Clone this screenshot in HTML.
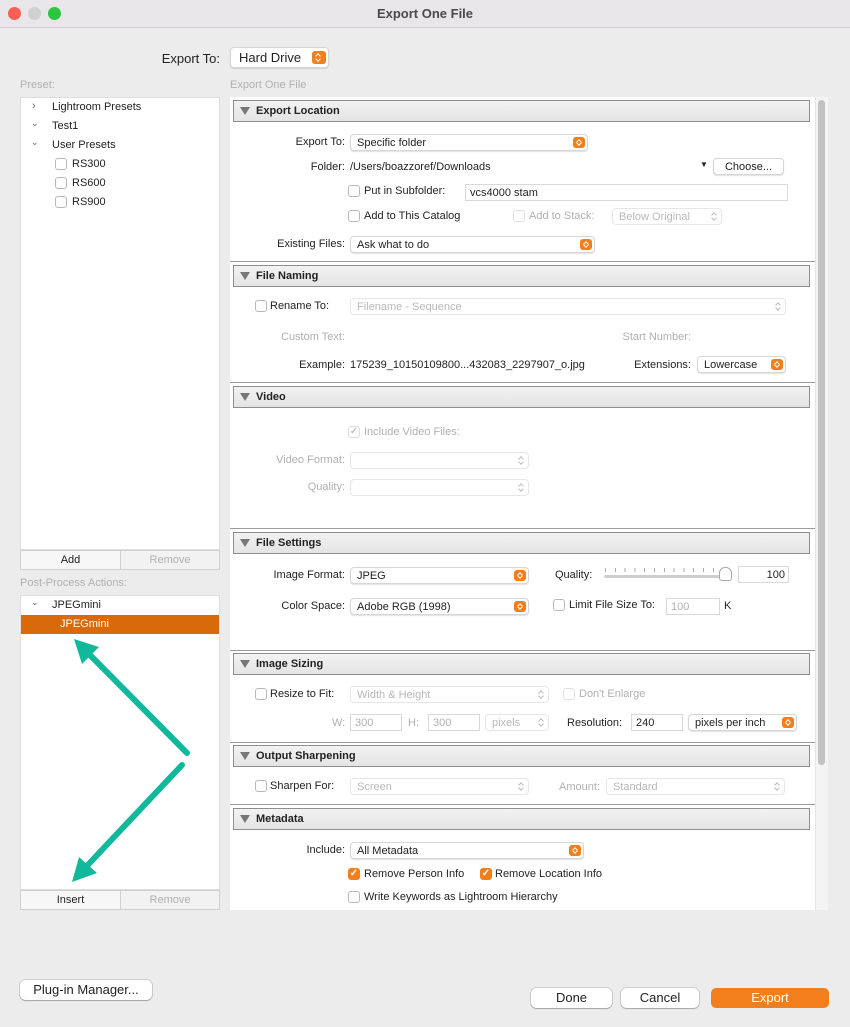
<!DOCTYPE html>
<html><head><meta charset="utf-8"><style>
*{box-sizing:border-box;margin:0;padding:0}
body{width:850px;height:1027px;background:#ececec;font-family:"Liberation Sans",sans-serif;font-size:11px;color:#222;position:relative;overflow:hidden}
.a{position:absolute;white-space:nowrap}
.r{text-align:right}
.g{color:#b0b0b0}
.pop{position:absolute;background:#fff;border:1px solid #d6d6d6;border-radius:4px;box-shadow:0 1px 1px rgba(0,0,0,.12);padding-left:6px;font-size:11px;line-height:16px}
.pop.d{color:#b8b8b8;border-color:#e6e6e6;box-shadow:none}
.or{position:absolute;right:2px;top:2px;width:12px;bottom:2px;background:#f27f1b;border-radius:3px;font-size:0}
.dd{position:absolute;right:3px;top:1px;width:10px;bottom:1px;font-size:0}
.or:before,.dd:before{content:"";position:absolute;left:4px;top:3px;width:3px;height:3px;border-left:1.2px solid #fff;border-top:1.2px solid #fff;transform:rotate(45deg)}
.or:after,.dd:after{content:"";position:absolute;left:4px;bottom:3px;width:3px;height:3px;border-right:1.2px solid #fff;border-bottom:1.2px solid #fff;transform:rotate(45deg)}
.dd:before{border-color:#bbb}.dd:after{border-color:#bbb}
.cb{position:absolute;width:12px;height:12px;border:1px solid #b9b9b9;border-radius:3px;background:#fff}
.cb.d{border-color:#e0e0e0}
.cb.on{background:#f27f1b;border-color:#f27f1b;color:#fff;font-size:10px;line-height:10px;text-align:center;font-weight:bold}
.cb.dn{border-color:#ddd;color:#aaa;font-size:10px;line-height:10px;text-align:center}
.in{position:absolute;background:#fff;border:1px solid #d9d9d9;padding-left:4px;line-height:16px}
.sh{position:absolute;left:233px;width:577px;height:22px;border:1px solid #8e8e8e;background:linear-gradient(#f2f2f2,#e4e4e4);font-weight:bold;font-size:11px;line-height:20px;padding-left:22px}
.sh:before{content:"";position:absolute;left:6px;top:6px;border-left:5px solid transparent;border-right:5px solid transparent;border-top:8px solid #777}
.sep{position:absolute;left:230px;width:585px;height:1px;background:#9a9a9a}
.btn{position:absolute;background:#fff;border-radius:5px;box-shadow:0 0 0 .5px rgba(0,0,0,.25),0 1px 1px rgba(0,0,0,.2);text-align:center;font-size:13px;line-height:20px}
</style></head><body>
<div class="a" style="left:0;top:0;width:850px;height:28px;background:#e8e6e8;border-bottom:1px solid #cfcfcf"></div>
<div class="a" style="left:8px;top:7px;width:13px;height:13px;border-radius:50%;background:#fd5f57"></div>
<div class="a" style="left:28px;top:7px;width:13px;height:13px;border-radius:50%;background:#d0d0d0"></div>
<div class="a" style="left:48px;top:7px;width:13px;height:13px;border-radius:50%;background:#29c63f"></div>
<div class="a" style="left:0;width:850px;top:6px;text-align:center;font-size:13px;font-weight:bold;color:#4a4a4a">Export One File</div>

<div class="a r" style="left:120px;width:100px;top:51px;font-size:13px">Export To:</div>
<div class="pop" style="left:230px;top:47px;width:99px;height:21px;font-size:13px;line-height:19px;padding-left:8px">Hard Drive<div class="or" style="width:14px;top:3px;bottom:3px"></div></div>

<div class="a g" style="left:20px;top:79px">Preset:</div>
<div class="a g" style="left:230px;top:79px">Export One File</div>

<div class="a" style="left:20px;top:97px;width:200px;height:453px;background:#fff;border:1px solid #dedede"></div>
<div class="a" style="left:32px;top:100px;color:#666">›</div><div class="a" style="left:52px;top:101px">Lightroom Presets</div>
<div class="a" style="left:31px;top:118px;color:#666;font-size:9px">⌄</div><div class="a" style="left:52px;top:120px">Test1</div>
<div class="a" style="left:31px;top:137px;color:#666;font-size:9px">⌄</div><div class="a" style="left:52px;top:139px">User Presets</div>
<div class="cb" style="left:55px;top:158px"></div><div class="a" style="left:72px;top:158px">RS300</div>
<div class="cb" style="left:55px;top:177px"></div><div class="a" style="left:72px;top:177px">RS600</div>
<div class="cb" style="left:55px;top:196px"></div><div class="a" style="left:72px;top:196px">RS900</div>
<div class="a" style="left:20px;top:550px;width:101px;height:20px;border:1px solid #cfcfcf;background:#f7f7f7;text-align:center;line-height:18px">Add</div>
<div class="a g" style="left:120px;top:550px;width:100px;height:20px;border:1px solid #cfcfcf;background:#f2f2f2;text-align:center;line-height:18px">Remove</div>

<div class="a g" style="left:20px;top:577px">Post-Process Actions:</div>
<div class="a" style="left:20px;top:595px;width:200px;height:295px;background:#fff;border:1px solid #dedede"></div>
<div class="a" style="left:31px;top:597px;color:#666;font-size:9px">⌄</div><div class="a" style="left:52px;top:599px">JPEGmini</div>
<div class="a" style="left:21px;top:615px;width:198px;height:19px;background:#d96a0b;color:#fff;padding-left:39px;line-height:19px">JPEGmini</div>
<div class="a" style="left:20px;top:890px;width:101px;height:20px;border:1px solid #cfcfcf;background:#f7f7f7;text-align:center;line-height:18px">Insert</div>
<div class="a g" style="left:120px;top:890px;width:100px;height:20px;border:1px solid #cfcfcf;background:#f2f2f2;text-align:center;line-height:18px">Remove</div>

<svg class="a" style="left:0;top:0" width="230" height="1000">
<g stroke="#12b89b" stroke-width="6" stroke-linecap="round" fill="#12b89b">
<line x1="187" y1="753" x2="86" y2="651"/>
<line x1="182" y1="765" x2="84" y2="869"/>
</g>
<polygon points="74,639 99,647 82,664" fill="#12b89b"/>
<polygon points="72,882 79,857 97,873" fill="#12b89b"/>
</svg>

<div class="a" style="left:230px;top:97px;width:598px;height:813px;background:#fff"></div>
<div class="a" style="left:815px;top:97px;width:13px;height:813px;background:#f4f4f4;border-left:1px solid #e4e4e4"></div>
<div class="a" style="left:818px;top:100px;width:7px;height:665px;background:#c2c2c2;border-radius:4px"></div>

<div class="sh" style="top:100px">Export Location</div>
<div class="a r" style="left:240px;width:105px;top:136px">Export To:</div>
<div class="pop" style="left:350px;top:134px;width:238px;height:17px">Specific folder<div class="or"></div></div>
<div class="a r" style="left:240px;width:105px;top:161px">Folder:</div>
<div class="a" style="left:350px;top:161px">/Users/boazzoref/Downloads</div>
<div class="a" style="left:700px;top:160px;font-size:8px">▼</div>
<div class="pop" style="left:713px;top:158px;width:71px;height:17px;padding:0;text-align:center">Choose...</div>
<div class="cb" style="left:348px;top:185px"></div><div class="a" style="left:364px;top:185px">Put in Subfolder:</div>
<div class="in" style="left:465px;top:184px;width:323px;height:17px">vcs4000 stam</div>
<div class="cb" style="left:348px;top:210px"></div><div class="a" style="left:364px;top:210px">Add to This Catalog</div>
<div class="cb d" style="left:513px;top:210px"></div><div class="a g" style="left:529px;top:210px">Add to Stack:</div>
<div class="pop d" style="left:612px;top:208px;width:110px;height:17px">Below Original<div class="dd"></div></div>
<div class="a r" style="left:240px;width:105px;top:238px">Existing Files:</div>
<div class="pop" style="left:350px;top:236px;width:245px;height:17px">Ask what to do<div class="or"></div></div>
<div class="sep" style="top:261px"></div>

<div class="sh" style="top:265px">File Naming</div>
<div class="cb" style="left:255px;top:300px"></div><div class="a" style="left:270px;top:300px">Rename To:</div>
<div class="pop d" style="left:350px;top:298px;width:436px;height:17px">Filename - Sequence<div class="dd"></div></div>
<div class="a r g" style="left:240px;width:105px;top:331px">Custom Text:</div>
<div class="a r g" style="left:580px;width:111px;top:331px">Start Number:</div>
<div class="a r" style="left:240px;width:105px;top:359px">Example:</div>
<div class="a" style="left:350px;top:359px">175239_10150109800...432083_2297907_o.jpg</div>
<div class="a r" style="left:580px;width:111px;top:359px">Extensions:</div>
<div class="pop" style="left:697px;top:356px;width:89px;height:17px">Lowercase<div class="or"></div></div>
<div class="sep" style="top:382px"></div>

<div class="sh" style="top:386px">Video</div>
<div class="cb dn" style="left:348px;top:426px">✓</div><div class="a g" style="left:364px;top:426px">Include Video Files:</div>
<div class="a r g" style="left:240px;width:105px;top:454px">Video Format:</div>
<div class="pop d" style="left:350px;top:452px;width:179px;height:17px"><div class="dd"></div></div>
<div class="a r g" style="left:240px;width:105px;top:481px">Quality:</div>
<div class="pop d" style="left:350px;top:479px;width:179px;height:17px"><div class="dd"></div></div>
<div class="sep" style="top:528px"></div>

<div class="sh" style="top:532px">File Settings</div>
<div class="a r" style="left:240px;width:105px;top:569px">Image Format:</div>
<div class="pop" style="left:350px;top:567px;width:179px;height:17px">JPEG<div class="or"></div></div>
<div class="a" style="left:555px;top:569px">Quality:</div>
<div class="a" style="left:604px;top:575px;width:124px;height:3px;background:#cfcfcf;border-radius:2px"></div>
<div class="a" style="left:605px;top:568px;width:118px;height:4px;background:repeating-linear-gradient(90deg,#aaa 0 1px,transparent 1px 9.8px)"></div>
<div class="a" style="left:719px;top:567px;width:13px;height:14px;background:#fff;border:1px solid #aaa;border-radius:6px 6px 3px 3px"></div>
<div class="in" style="left:738px;top:566px;width:51px;height:17px;text-align:right;padding-right:3px">100</div>
<div class="a r" style="left:240px;width:105px;top:600px">Color Space:</div>
<div class="pop" style="left:350px;top:598px;width:179px;height:17px">Adobe RGB (1998)<div class="or"></div></div>
<div class="cb" style="left:553px;top:599px"></div><div class="a" style="left:569px;top:599px">Limit File Size To:</div>
<div class="in g" style="left:666px;top:598px;width:54px;height:17px">100</div>
<div class="a" style="left:724px;top:600px">K</div>
<div class="sep" style="top:650px"></div>

<div class="sh" style="top:653px">Image Sizing</div>
<div class="cb" style="left:255px;top:688px"></div><div class="a" style="left:270px;top:688px">Resize to Fit:</div>
<div class="pop d" style="left:350px;top:686px;width:199px;height:17px">Width &amp; Height<div class="dd"></div></div>
<div class="cb d" style="left:563px;top:688px"></div><div class="a g" style="left:579px;top:688px">Don't Enlarge</div>
<div class="a g" style="left:332px;top:717px">W:</div>
<div class="in g" style="left:350px;top:714px;width:52px;height:17px">300</div>
<div class="a g" style="left:408px;top:717px">H:</div>
<div class="in g" style="left:428px;top:714px;width:52px;height:17px">300</div>
<div class="pop d" style="left:485px;top:714px;width:64px;height:17px">pixels<div class="dd"></div></div>
<div class="a" style="left:567px;top:717px">Resolution:</div>
<div class="in" style="left:631px;top:714px;width:52px;height:17px">240</div>
<div class="pop" style="left:688px;top:714px;width:109px;height:17px">pixels per inch<div class="or"></div></div>
<div class="sep" style="top:742px"></div>

<div class="sh" style="top:745px">Output Sharpening</div>
<div class="cb" style="left:255px;top:780px"></div><div class="a" style="left:270px;top:780px">Sharpen For:</div>
<div class="pop d" style="left:350px;top:778px;width:179px;height:17px">Screen<div class="dd"></div></div>
<div class="a r g" style="left:500px;width:100px;top:781px">Amount:</div>
<div class="pop d" style="left:606px;top:778px;width:179px;height:17px">Standard<div class="dd"></div></div>
<div class="sep" style="top:804px"></div>

<div class="sh" style="top:808px">Metadata</div>
<div class="a r" style="left:240px;width:105px;top:844px">Include:</div>
<div class="pop" style="left:350px;top:842px;width:234px;height:17px">All Metadata<div class="or"></div></div>
<div class="cb on" style="left:348px;top:868px">✓</div><div class="a" style="left:364px;top:868px">Remove Person Info</div>
<div class="cb on" style="left:480px;top:868px">✓</div><div class="a" style="left:495px;top:868px">Remove Location Info</div>
<div class="cb" style="left:348px;top:891px"></div><div class="a" style="left:364px;top:891px">Write Keywords as Lightroom Hierarchy</div>

<div class="btn" style="left:20px;top:980px;width:132px;height:20px">Plug-in Manager...</div>
<div class="btn" style="left:531px;top:988px;width:81px;height:20px">Done</div>
<div class="btn" style="left:621px;top:988px;width:78px;height:20px">Cancel</div>
<div class="btn" style="left:711px;top:988px;width:118px;height:20px;background:#f27f1b;color:#fff;box-shadow:none">Export</div>
</body></html>
